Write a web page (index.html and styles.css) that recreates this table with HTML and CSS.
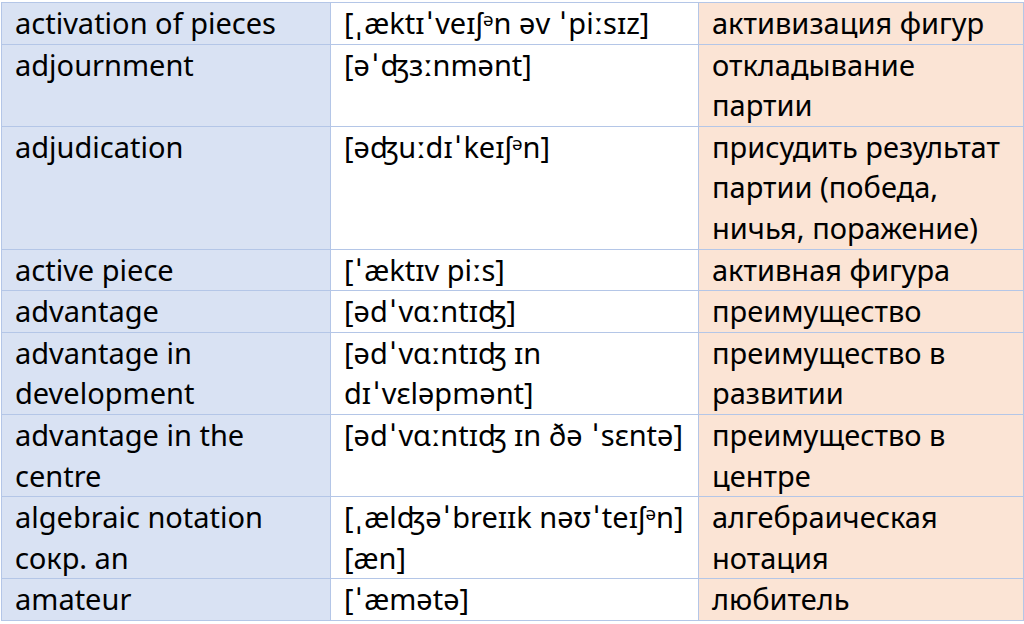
FILE: index.html
```html
<!DOCTYPE html>
<html lang="en">
<head>
<meta charset="utf-8">
<title>Chess glossary</title>
<link rel="stylesheet" href="styles.css">
</head>
<body>
<table class="gloss">
  <colgroup>
    <col class="c-term">
    <col class="c-ipa">
    <col class="c-ru">
  </colgroup>
  <tbody>
    <tr><td class="term">activation of pieces</td><td class="ipa">[<span class="st">ˌ</span>æktɪ<span class="st">ˈ</span>veɪʃᵊn əv <span class="st">ˈ</span>piːsɪz]</td><td class="ru">активизация фигур</td></tr>
    <tr><td class="term">adjournment</td><td class="ipa">[ə<span class="st">ˈ</span>ʤɜːnmənt]</td><td class="ru">откладывание<br>партии</td></tr>
    <tr><td class="term">adjudication</td><td class="ipa">[əʤuːdɪ<span class="st">ˈ</span>keɪʃᵊn]</td><td class="ru">присудить результат<br>партии (победа,<br>ничья, поражение)</td></tr>
    <tr><td class="term">active piece</td><td class="ipa">[<span class="st">ˈ</span>æktɪv piːs]</td><td class="ru">активная фигура</td></tr>
    <tr><td class="term">advantage</td><td class="ipa">[əd<span class="st">ˈ</span>vɑːntɪʤ]</td><td class="ru">преимущество</td></tr>
    <tr><td class="term">advantage in<br>development</td><td class="ipa">[əd<span class="st">ˈ</span>vɑːntɪʤ ɪn<br>dɪ<span class="st">ˈ</span>vɛləpmənt]</td><td class="ru">преимущество в<br>развитии</td></tr>
    <tr><td class="term">advantage in the<br>centre</td><td class="ipa">[əd<span class="st">ˈ</span>vɑːntɪʤ ɪn ðə <span class="st">ˈ</span>sɛntə]</td><td class="ru">преимущество в<br>центре</td></tr>
    <tr><td class="term">algebraic notation<br>сокр. an</td><td class="ipa">[<span class="st">ˌ</span>ælʤə<span class="st">ˈ</span>breɪɪk nəʊ<span class="st">ˈ</span>teɪʃᵊn]<br>[æn]</td><td class="ru">алгебраическая<br>нотация</td></tr>
    <tr><td class="term">amateur</td><td class="ipa">[<span class="st">ˈ</span>æmətə]</td><td class="ru">любитель</td></tr>
  </tbody>
</table>
</body>
</html>
```

FILE: styles.css
```css
html, body {
  margin: 0;
  padding: 0;
  background: #ffffff;
}

body {
  padding: 2px 0 0 1px;
}

.gloss {
  border-collapse: collapse;
  table-layout: fixed;
  width: 1022px;
  font-family: "Noto Sans", "DejaVu Sans", sans-serif;
  font-size: 29px;
  line-height: 40.6px;
  color: #000000;
}

.c-term { width: 329px; }
.c-ipa { width: 368px; }
.c-ru { width: 325px; }

.gloss td {
  border: 1px solid #b4c6e7;
  padding: 0 4px 0 13px;
  vertical-align: top;
  white-space: nowrap;
  overflow: hidden;
}

.term { background: #d9e2f3; }
.ipa { background: #ffffff; }
.ru { background: #fbe4d5; }

.st {
  margin: 0 3px;
}
```
